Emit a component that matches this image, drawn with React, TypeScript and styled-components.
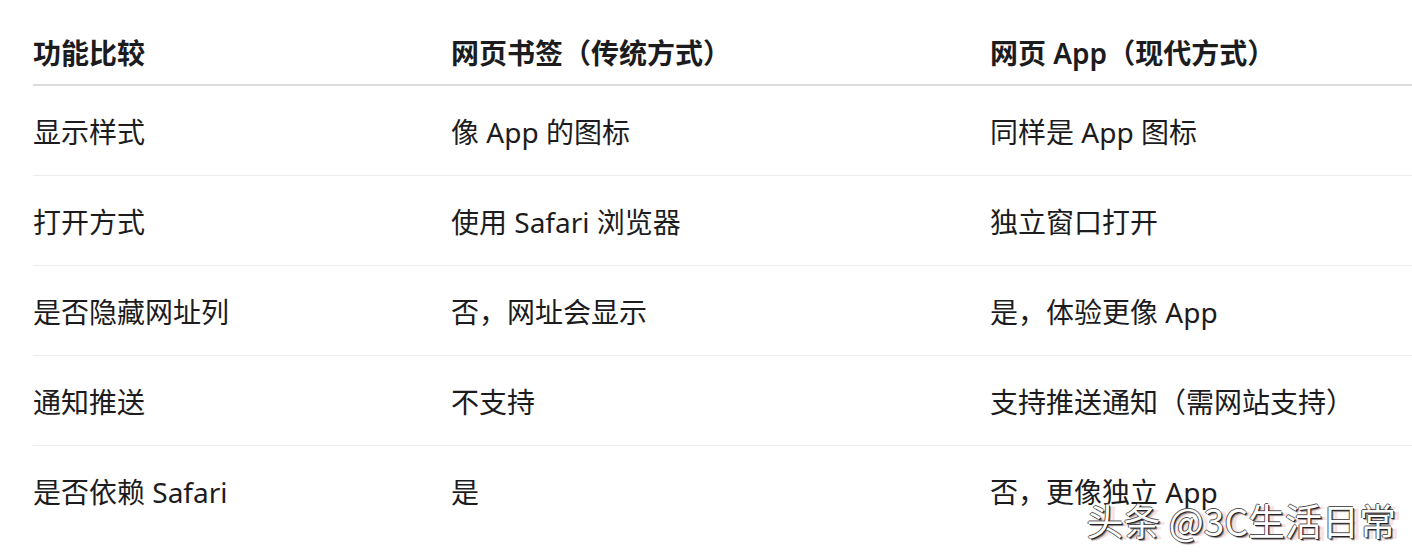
import React from 'react';
import styled, { createGlobalStyle } from 'styled-components';

const GlobalStyle = createGlobalStyle`
  html, body {
    margin: 0;
    padding: 0;
    background: #fff;
  }
  body {
    font-family: 'Noto Sans', 'Noto Sans CJK SC', sans-serif;
    color: #1c1c1e;
  }
`;

const Page = styled.section`
  position: relative;
  width: 1412px;
  height: 554px;
  overflow: hidden;
  padding: 20px 0 0 33px;
  box-sizing: border-box;
`;

const Table = styled.table`
  border-collapse: collapse;
  width: 1420px;
  table-layout: fixed;
  font-size: 28px;
`;

const HeadCell = styled.th<{ $width?: number }>`
  width: ${(p) => (p.$width ? `${p.$width}px` : 'auto')};
  height: 64px;
  padding: 0;
  text-align: left;
  vertical-align: middle;
  font-weight: 600;
  border-bottom: 2px solid #dcdcdc;
  white-space: nowrap;
`;

const Row = styled.tr`
  border-bottom: 1px solid #ececec;
  &:last-child {
    border-bottom: none;
  }
`;

const Cell = styled.td`
  height: 89px;
  padding: 0;
  vertical-align: middle;
  font-weight: 400;
  white-space: nowrap;
`;

const Watermark = styled.div`
  position: absolute;
  right: 16px;
  bottom: 12px;
  font-family: 'Noto Sans CJK SC', sans-serif;
  font-size: 37px;
  line-height: 1.2;
  color: #fff;
  text-shadow: 1px 1px 0 #222, -1px 0 0 #555, 0 -1px 0 #555, 2px 2px 1px rgba(0, 0, 0, 0.45),
    6px 2px 0 rgba(240, 170, 180, 0.35);
`;

const columns = [
  { title: '功能比较', width: 418 },
  { title: '网页书签（传统方式）', width: 539 },
  { title: '网页 App（现代方式）' },
];

const rows = [
  ['显示样式', '像 App 的图标', '同样是 App 图标'],
  ['打开方式', '使用 Safari 浏览器', '独立窗口打开'],
  ['是否隐藏网址列', '否，网址会显示', '是，体验更像 App'],
  ['通知推送', '不支持', '支持推送通知（需网站支持）'],
  ['是否依赖 Safari', '是', '否，更像独立 App'],
];

const App: React.FC = () => {
  return (
    <Page>
      <GlobalStyle />
      <Table>
        <thead>
          <tr>
            {columns.map((c) => (
              <HeadCell key={c.title} $width={c.width}>
                {c.title}
              </HeadCell>
            ))}
          </tr>
        </thead>
        <tbody>
          {rows.map((r) => (
            <Row key={r[0]}>
              {r.map((text, i) => (
                <Cell key={i}>{text}</Cell>
              ))}
            </Row>
          ))}
        </tbody>
      </Table>
      <Watermark>头条 @3C生活日常</Watermark>
    </Page>
  );
};

export default App;
